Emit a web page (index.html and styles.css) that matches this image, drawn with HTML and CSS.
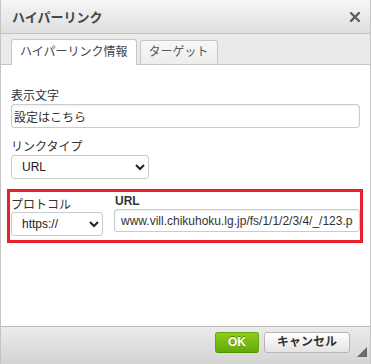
FILE: index.html
```html
<!DOCTYPE html>
<html lang="ja">

<head>
    <meta charset="UTF-8">
    <meta name="viewport" content="width=device-width, initial-scale=1.0">
    <title>ハイパーリンク</title>
    <link rel="stylesheet" href="styles.css">
</head>

<body>
    <div class="dialog">
        <div class="dialog-title">
            <span>ハイパーリンク</span>
            <a href="javascript:;" class="dialog-close" title="閉じる">
                <svg width="10" height="10" viewBox="0 0 10 10">
                    <path d="M1 1L9 9M9 1L1 9" stroke="#5f5f5f" stroke-width="2.4" stroke-linecap="square" />
                </svg>
            </a>
        </div>
        <div class="dialog-tabs">
            <a href="javascript:;" class="tab tab-active">ハイパーリンク情報</a>
            <a href="javascript:;" class="tab">ターゲット</a>
        </div>
        <div class="dialog-contents">
            <div class="field">
                <label>表示文字</label>
                <input type="text" class="text-input" value="設定はこちら">
            </div>
            <div class="field field-gap">
                <label>リンクタイプ</label>
                <select class="select select-type">
                    <option>URL</option>
                    <option>ページ内のアンカー</option>
                    <option>E-Mail</option>
                </select>
            </div>
            <!-- 注目枠 -->
            <div class="url-box">
                <div class="protocol">
                    <label>プロトコル</label>
                    <select class="select select-protocol">
                        <option>https://</option>
                        <option>http://</option>
                        <option>ftp://</option>
                    </select>
                </div>
                <div class="url">
                    <label class="url-label">URL</label>
                    <input type="text" class="url-input" value="www.vill.chikuhoku.lg.jp/fs/1/1/2/3/4/_/123.pdf">
                </div>
            </div>
        </div>
        <div class="dialog-footer">
            <a href="javascript:;" class="btn btn-ok">OK</a>
            <a href="javascript:;" class="btn btn-cancel">キャンセル</a>
            <span class="resize"></span>
        </div>
    </div>
</body>

</html>
```

FILE: styles.css
```css
* {
    box-sizing: border-box;
    outline: none;
}

body,
html {
    height: 100%;
    margin: 0;
}

body {
    font-family: "Liberation Sans", "Noto Sans CJK JP", sans-serif;
    font-size: 12px;
    color: #333;
    background-color: #fff;
}

a {
    text-decoration: none;
    color: #333;
}

.dialog {
    display: flex;
    flex-direction: column;
    width: 371px;
    height: 364px;
    border-left: 1px solid #c4c4c4;
    border-right: 1px solid #c4c4c4;
    background-color: #eaeaea;
}

.dialog-title {
    display: flex;
    align-items: center;
    justify-content: space-between;
    height: 34px;
    padding: 0 10px 0 11px;
    font-size: 13px;
    font-weight: bold;
    color: #474747;
    border-bottom: 1px solid #c2c2c2;
    background: linear-gradient(#f6f6f6, #dedede);
}

.dialog-close {
    display: flex;
    width: 10px;
    height: 10px;
    margin-top: 1px;
}

.dialog-tabs {
    display: flex;
    align-items: flex-end;
    gap: 3px;
    height: 31px;
    padding-left: 10px;
    border-bottom: 1px solid #c6c6c6;
}

.tab {
    height: 24px;
    padding: 0 8px;
    line-height: 23px;
    color: #595959;
    border: 1px solid #c6c6c6;
    border-bottom: none;
    border-radius: 3px 3px 0 0;
    background: linear-gradient(#f7f7f7, #ededed);
}

.tab-active {
    height: 26px;
    margin-bottom: -1px;
    line-height: 24px;
    color: #444;
    background: #fff;
}

.dialog-contents {
    flex: 1;
    padding: 24px 10px 0;
    background-color: #fff;
}

.field label {
    display: block;
    line-height: 15px;
    color: #333;
}

.field-gap {
    margin-top: 12px;
}

.text-input,
.url-input {
    display: block;
    width: 100%;
    height: 24px;
    padding: 0 2px;
    font: inherit;
    color: #333;
    border: 1px solid #c9cccf;
    border-radius: 3px;
    box-shadow: inset 0 1px 2px rgba(0, 0, 0, .08);
}

.select {
    display: block;
    height: 24px;
    padding-left: 6px;
    font: inherit;
    color: #222;
    border: 1px solid #c9cccf;
    border-radius: 3px;
    background-color: #fff;
}

.select-type {
    width: 138px;
}

.url-box {
    display: flex;
    gap: 11px;
    margin: 10px -3px 0 -4px;
    padding: 0 0 4px 1px;
    border: 3px solid #e6212b;
}

.protocol {
    padding-top: 6px;
}

.protocol label {
    display: block;
    line-height: 14px;
}

.select-protocol {
    width: 92px;
}

.url {
    flex: 1;
    padding-top: 2px;
}

.url-label {
    display: block;
    line-height: 15px;
    font-weight: bold;
    padding-left: 1px;
}

.url-input {
    height: 23px;
    padding: 0 6px;
}

.dialog-footer {
    display: flex;
    justify-content: flex-end;
    align-items: flex-start;
    gap: 5px;
    height: 38px;
    padding: 5px 3px 0 0;
    border-top: 1px solid #bdbdbd;
    background: linear-gradient(#ebebeb, #d4d4d4);
}

.btn {
    height: 21px;
    padding: 0 12px;
    line-height: 19px;
    font-weight: bold;
    font-size: 12px;
    border: 1px solid #b6b6b6;
    border-radius: 3px;
    background: linear-gradient(#fff, #e4e4e4);
}

.btn-ok {
    color: #fff;
    border-color: #62a60a #62a60a #4d9200;
    background: linear-gradient(#8fcc1a, #62aa0a);
    text-shadow: 0 -1px 0 #55830c;
}

.btn-cancel {
    color: #333;
}

.resize {
    align-self: flex-end;
    width: 0;
    height: 0;
    margin: 0 0 7px 2px;
    border-style: solid;
    border-width: 0 0 10px 10px;
    border-color: transparent transparent #6a6a6a transparent;
}
```
